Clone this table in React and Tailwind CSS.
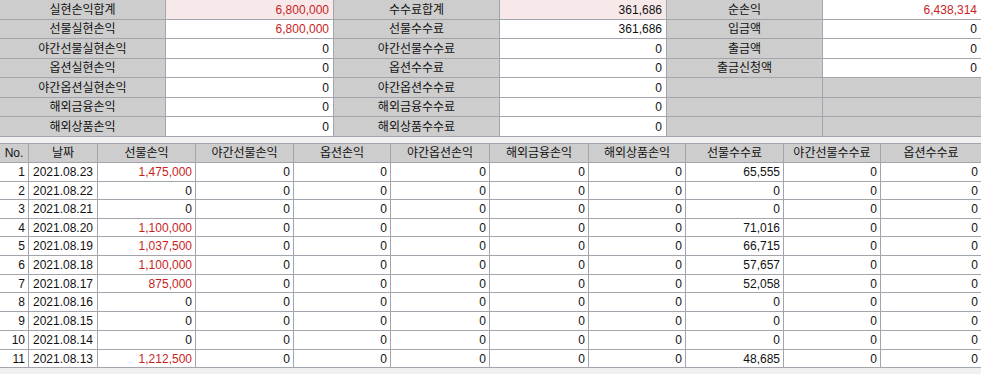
import React from "react";

// summary block: [label, value, red, pink] x 3 columns, 7 rows
const summary = [
  [["실현손익합계", "6,800,000", true, true], ["수수료합계", "361,686", false, true], ["순손익", "6,438,314", true, false]],
  [["선물실현손익", "6,800,000", true], ["선물수수료", "361,686"], ["입금액", "0"]],
  [["야간선물실현손익", "0"], ["야간선물수수료", "0"], ["출금액", "0"]],
  [["옵션실현손익", "0"], ["옵션수수료", "0"], ["출금신청액", "0"]],
  [["야간옵션실현손익", "0"], ["야간옵션수수료", "0"], null],
  [["해외금융손익", "0"], ["해외금융수수료", "0"], null],
  [["해외상품손익", "0"], ["해외상품수수료", "0"], null],
];

const headers = [
  "No.",
  "날짜",
  "선물손익",
  "야간선물손익",
  "옵션손익",
  "야간옵션손익",
  "해외금융손익",
  "해외상품손익",
  "선물수수료",
  "야간선물수수료",
  "옵션수수료",
];

const rows = [
  ["2021.08.23", "1,475,000", "65,555"],
  ["2021.08.22", "0", "0"],
  ["2021.08.21", "0", "0"],
  ["2021.08.20", "1,100,000", "71,016"],
  ["2021.08.19", "1,037,500", "66,715"],
  ["2021.08.18", "1,100,000", "57,657"],
  ["2021.08.17", "875,000", "52,058"],
  ["2021.08.16", "0", "0"],
  ["2021.08.15", "0", "0"],
  ["2021.08.14", "0", "0"],
  ["2021.08.13", "1,212,500", "48,685"],
];

const Num = ({ children, red }) => (
  <div className={`bg-white flex items-center justify-end pr-[3px] ${red ? "text-[#c81e1e]" : ""}`}>
    {children}
  </div>
);

export default function App() {
  return (
    <div className="w-[981px] h-[374px] bg-[#f0f0f0] overflow-hidden text-[12px] leading-none text-[#111] font-['Liberation_Sans','Noto_Sans_CJK_KR',sans-serif]">
      {/* Summary */}
      <div className="grid grid-cols-[165px_167px_165px_166px_155px_158px] grid-rows-[19px_18px_19px_18px_19px_18px_19px] gap-px bg-[#a4a4ac] pb-px">
        {summary.map((row, ri) =>
          row.map((cell, ci) =>
            cell ? (
              <React.Fragment key={`${ri}-${ci}`}>
                <div className="bg-[#cdcdcd] flex items-center justify-center">{cell[0]}</div>
                <div
                  className={`flex items-center justify-end pr-[4px] ${cell[3] ? "bg-[#f7e9e9]" : "bg-white"} ${cell[2] ? "text-[#c81e1e]" : ""}`}
                >
                  {cell[1]}
                </div>
              </React.Fragment>
            ) : (
              <React.Fragment key={`${ri}-${ci}`}>
                <div className="bg-[#cdcdcd]" />
                <div className="bg-[#cdcdcd]" />
              </React.Fragment>
            )
          )
        )}
      </div>

      {/* Daily table */}
      <div className="mt-[6px] grid grid-cols-[28px_68px_97px_97px_96px_98px_98px_96px_97px_96px_100px] grid-rows-[18px_18px_17px_18px_17px_18px_18px_17px_18px_18px_18px_17px] gap-px bg-[#a4a4ac] py-px">
        {headers.map((h) => (
          <div key={h} className="bg-[#cdcdcd] flex items-center justify-center">
            {h}
          </div>
        ))}
        {rows.map((r, i) => (
          <React.Fragment key={i}>
            <Num>{i + 1}</Num>
            <div className="bg-white flex items-center justify-center">{r[0]}</div>
            <Num red={r[1] !== "0"}>{r[1]}</Num>
            <Num>0</Num>
            <Num>0</Num>
            <Num>0</Num>
            <Num>0</Num>
            <Num>0</Num>
            <Num>{r[2]}</Num>
            <Num>0</Num>
            <Num>0</Num>
          </React.Fragment>
        ))}
      </div>
    </div>
  );
}
